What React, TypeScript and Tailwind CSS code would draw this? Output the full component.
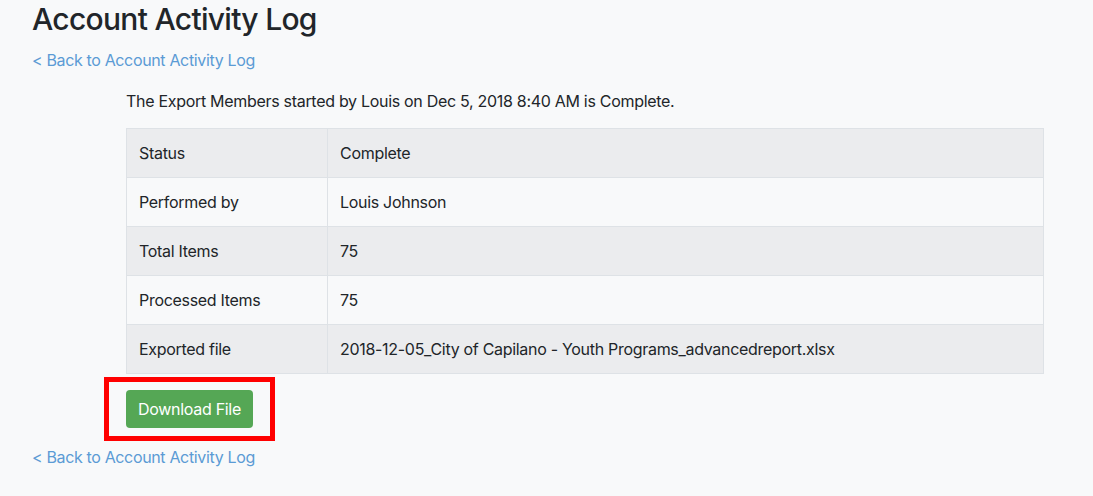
const rows: [string, string][] = [
  ["Status", "Complete"],
  ["Performed by", "Louis Johnson"],
  ["Total Items", "75"],
  ["Processed Items", "75"],
  ["Exported file", "2018-12-05_City of Capilano - Youth Programs_advancedreport.xlsx"],
];

function BackLink() {
  return (
    <a href="#" className="block text-base leading-6 tracking-[-0.35px] text-[#5b9bd5] no-underline">
      &lt; Back to Account Activity Log
    </a>
  );
}

export default function App() {
  return (
    <div
      className="min-h-[496px] w-full bg-[#f8f9fa] pl-8 text-[#212529]"
      style={{ fontFamily: "Inter, 'Noto Sans', sans-serif" }}
    >
      <h1 className="text-[30px] leading-[38px] font-medium tracking-[-0.7px]">Account Activity Log</h1>
      <div className="mt-[10px]">
        <BackLink />
      </div>

      <div className="ml-[94px] w-[918px] pt-[17px] tracking-[-0.3px]">
        <p className="text-base leading-6">
          The Export Members started by Louis on Dec 5, 2018 8:40 AM is Complete.
        </p>
        <table className="mt-[15px] w-full border-collapse border border-[#dee2e6] text-base">
          <tbody>
            {rows.map(([label, value], i) => (
              <tr key={label} className={i % 2 === 0 ? "bg-[#ebecee]" : "bg-[#f8f9fa]"}>
                <td className="w-[201px] border border-[#dee2e6] px-3 py-3 leading-6">{label}</td>
                <td className="border border-[#dee2e6] px-3 py-3 leading-6">{value}</td>
              </tr>
            ))}
          </tbody>
        </table>
      </div>

      <div className="ml-[72px] mt-[3px] h-[64px] w-[171px] border-[5px] border-[#ff0000] pl-[17px] pt-[8px]">
        <button className="h-[38px] w-[127px] rounded-[4px] bg-[#55a755] text-base tracking-[-0.3px] text-white">
          Download File
        </button>
      </div>

      <div className="mt-1">
        <BackLink />
      </div>
    </div>
  );
}
